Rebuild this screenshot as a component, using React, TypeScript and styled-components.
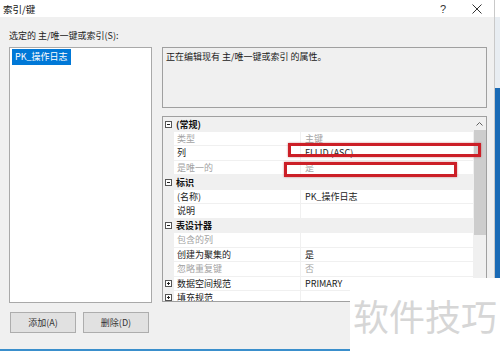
import React from 'react';
import styled, { createGlobalStyle } from 'styled-components';

type Item = { name: string; value?: string; disabled?: boolean; expandable?: boolean };
type Section = { title: string; items: Item[] };

const sections: Section[] = [
  {
    title: '(常规)',
    items: [
      { name: '类型', value: '主键', disabled: true },
      { name: '列', value: 'FLLID (ASC)' },
      { name: '是唯一的', value: '是', disabled: true },
    ],
  },
  {
    title: '标识',
    items: [
      { name: '(名称)', value: 'PK_操作日志' },
      { name: '说明', value: '' },
    ],
  },
  {
    title: '表设计器',
    items: [
      { name: '包含的列', value: '', disabled: true },
      { name: '创建为聚集的', value: '是' },
      { name: '忽略重复键', value: '否', disabled: true },
      { name: '数据空间规范', value: 'PRIMARY', expandable: true },
      { name: '填充规范', value: '', expandable: true },
    ],
  },
];

const ToggleBox = ({ open }: { open: boolean }) => (
  <svg width='7' height='7' viewBox='0 0 7 7'>
    <rect x='0.5' y='0.5' width='6' height='6' fill='#fff' stroke='#555' />
    <line x1='2' y1='3.5' x2='5' y2='3.5' stroke='#222' />
    {!open && <line x1='3.5' y1='2' x2='3.5' y2='5' stroke='#222' />}
  </svg>
);

export default function App() {
  return (
    <Screen>
      <GlobalStyle />
      <Dialog>
        <TitleBar>
          <Title>索引/键</Title>
          <TitleButtons>
            <TitleButton>?</TitleButton>
            <TitleButton>
              <svg width='10' height='10' viewBox='0 0 10 10'>
                <line x1='0.5' y1='0.5' x2='9.5' y2='9.5' stroke='#333' />
                <line x1='9.5' y1='0.5' x2='0.5' y2='9.5' stroke='#333' />
              </svg>
            </TitleButton>
          </TitleButtons>
        </TitleBar>
        <Body>
          <LeftCol>
            <Label>选定的 主/唯一键或索引(S):</Label>
            <ListBox>
              <ListItem>PK_操作日志</ListItem>
            </ListBox>
            <ButtonRow>
              <Button>添加(A)</Button>
              <Button>删除(D)</Button>
            </ButtonRow>
          </LeftCol>
          <RightCol>
            <DescBox>正在编辑现有 主/唯一键或索引 的属性。</DescBox>
            <PropGrid>
              <Rows>
                {sections.map((s) => (
                  <React.Fragment key={s.title}>
                    <CategoryRow>
                      <Gutter>
                        <ToggleBox open />
                      </Gutter>
                      <CategoryName>{s.title}</CategoryName>
                    </CategoryRow>
                    {s.items.map((it) => (
                      <PropRow key={it.name}>
                        <Gutter>{it.expandable && <ToggleBox open={false} />}</Gutter>
                        <NameCell $disabled={it.disabled}>{it.name}</NameCell>
                        <ValueCell $disabled={it.disabled}>{it.value}</ValueCell>
                      </PropRow>
                    ))}
                  </React.Fragment>
                ))}
              </Rows>
              <ScrollBar>
                <ScrollArrow>
                  <svg width='7' height='4' viewBox='0 0 7 4'>
                    <polyline points='0.5,3.5 3.5,0.5 6.5,3.5' fill='none' stroke='#606060' />
                  </svg>
                </ScrollArrow>
                <ScrollThumb />
              </ScrollBar>
            </PropGrid>
          </RightCol>
        </Body>
      </Dialog>
      <Desktop />
      <Mark $x={288} $y={143} $w={193} $h={14} />
      <Mark $x={284} $y={162} $w={173} $h={15} />
      <Watermark>软件技巧</Watermark>
    </Screen>
  );
}

const GlobalStyle = createGlobalStyle`
  html, body {
    margin: 0;
    padding: 0;
    background: #fff;
    overflow: hidden;
  }
  body {
    font-family: 'Noto Sans CJK SC', 'Noto Sans', sans-serif;
    font-size: 9px;
    color: #1a1a1a;
  }
`;

const Screen = styled.div`
  position: relative;
  width: 500px;
  height: 351px;
  display: flex;
  overflow: hidden;
`;

const Dialog = styled.div`
  width: 494px;
  display: flex;
  flex-direction: column;
  background: #f0f0f0;
  border-bottom: 2px solid #3a8fcc;
  box-sizing: border-box;
`;

const Desktop = styled.div`
  width: 6px;
  border-left: 1px solid #c9c9c9;
  background: linear-gradient(
    to bottom,
    #fff 0,
    #fff 17px,
    #e8edf2 17px,
    #e8edf2 88px,
    #1a6ab5 88px
  );
`;

const TitleBar = styled.div`
  height: 17px;
  flex-shrink: 0;
  background: #fff;
  display: flex;
  align-items: center;
  justify-content: space-between;
  padding-left: 3px;
`;

const Title = styled.span`
  font-size: 9.5px;
  color: #111;
`;

const TitleButtons = styled.div`
  display: flex;
  height: 100%;
`;

const TitleButton = styled.div`
  width: 34px;
  display: flex;
  align-items: center;
  justify-content: center;
  font-family: 'Liberation Sans', sans-serif;
  font-size: 11px;
  color: #333;
`;

const Body = styled.div`
  flex: 1;
  display: flex;
  gap: 10px;
  padding: 12px 7px 0 9px;
`;

const LeftCol = styled.div`
  width: 143px;
  display: flex;
  flex-direction: column;
`;

const Label = styled.div`
  height: 14px;
  line-height: 14px;
  margin-bottom: 4px;
  color: #222;
  white-space: nowrap;
`;

const ListBox = styled.div`
  height: 256px;
  box-sizing: border-box;
  background: #fff;
  border: 1px solid #a9a9a9;
  padding: 1px 2px;
`;

const ListItem = styled.span`
  display: inline-block;
  height: 16px;
  line-height: 16px;
  padding: 0 3px;
  background: #0078d7;
  color: #fff;
`;

const ButtonRow = styled.div`
  display: flex;
  gap: 7px;
  margin-top: 9px;
  padding-left: 1px;
`;

const Button = styled.div`
  width: 66px;
  height: 21px;
  box-sizing: border-box;
  display: flex;
  align-items: center;
  justify-content: center;
  background: #e1e1e1;
  border: 1px solid #adadad;
  color: #333;
`;

const RightCol = styled.div`
  width: 325px;
  display: flex;
  flex-direction: column;
  padding-top: 18px;
`;

const DescBox = styled.div`
  height: 61px;
  box-sizing: border-box;
  border: 1px solid #a0a0a0;
  padding: 3px 3px;
  line-height: 12px;
  color: #1a1a1a;
`;

const PropGrid = styled.div`
  margin-top: 8px;
  height: 186px;
  box-sizing: border-box;
  border: 1px solid #a0a0a0;
  background: #fff;
  display: flex;
  overflow: hidden;
`;

const Rows = styled.div`
  flex: 1;
  overflow: hidden;
`;

const RowBase = styled.div`
  height: 14.5px;
  display: flex;
  align-items: stretch;
  box-sizing: border-box;
`;

const CategoryRow = styled(RowBase)`
  background: #f0f0f0;
`;

const PropRow = styled(RowBase)`
  border-bottom: 1px solid #f0f0f0;
`;

const Gutter = styled.div`
  width: 11px;
  flex-shrink: 0;
  background: #f0f0f0;
  display: flex;
  align-items: center;
  justify-content: center;
`;

const CategoryName = styled.div`
  padding-left: 2px;
  font-weight: bold;
  display: flex;
  align-items: center;
  color: #111;
`;

const NameCell = styled.div<{ $disabled?: boolean }>`
  width: 127px;
  flex-shrink: 0;
  box-sizing: border-box;
  padding-left: 3px;
  border-right: 1px solid #f0f0f0;
  display: flex;
  align-items: center;
  color: ${(p) => (p.$disabled ? '#a3a3a3' : '#1a1a1a')};
  white-space: nowrap;
`;

const ValueCell = styled.div<{ $disabled?: boolean }>`
  flex: 1;
  padding-left: 4px;
  display: flex;
  align-items: center;
  color: ${(p) => (p.$disabled ? '#a3a3a3' : '#1a1a1a')};
  white-space: nowrap;
`;

const ScrollBar = styled.div`
  width: 13px;
  flex-shrink: 0;
  background: #f0f0f0;
  display: flex;
  flex-direction: column;
  align-items: center;
`;

const ScrollArrow = styled.div`
  height: 13px;
  width: 100%;
  display: flex;
  align-items: center;
  justify-content: center;
`;

const ScrollThumb = styled.div`
  width: 12px;
  height: 105px;
  background: #cdcdcd;
`;

const Mark = styled.div<{ $x: number; $y: number; $w: number; $h: number }>`
  position: absolute;
  left: ${(p) => p.$x}px;
  top: ${(p) => p.$y}px;
  width: ${(p) => p.$w}px;
  height: ${(p) => p.$h}px;
  box-sizing: border-box;
  border: 3px solid #cc1f27;
  box-shadow: 0 0 2px rgba(160, 0, 0, 0.45);
`;

const Watermark = styled.div`
  position: absolute;
  left: 350px;
  top: 278px;
  right: 0;
  bottom: 0;
  background: #fff;
  display: flex;
  align-items: center;
  padding-left: 3px;
  font-size: 36px;
  line-height: 1;
  color: #d6d6d6;
  white-space: nowrap;
`;
